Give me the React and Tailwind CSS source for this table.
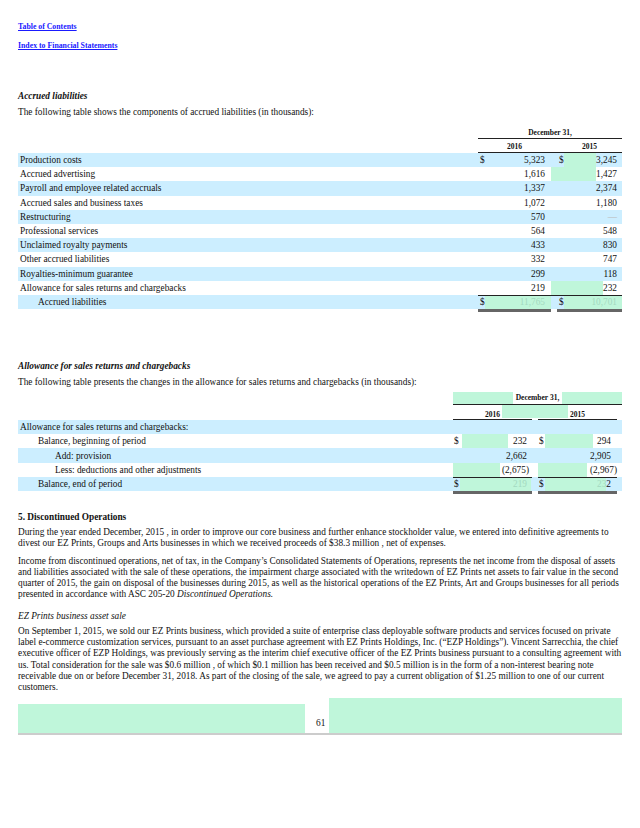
import React from 'react';

const accrued = [
  { label: 'Production costs', a: '5,323', b: '3,245', dollar: true, blue: true, fillB: true },
  { label: 'Accrued advertising', a: '1,616', b: '1,427', fillGap: true, fillB: true },
  { label: 'Payroll and employee related accruals', a: '1,337', b: '2,374', blue: true },
  { label: 'Accrued sales and business taxes', a: '1,072', b: '1,180' },
  { label: 'Restructuring', a: '570', b: '—', blue: true, dash: true },
  { label: 'Professional services', a: '564', b: '548' },
  { label: 'Unclaimed royalty payments', a: '433', b: '830', blue: true },
  { label: 'Other accrued liabilities', a: '332', b: '747' },
  { label: 'Royalties-minimum guarantee', a: '299', b: '118', blue: true },
  { label: 'Allowance for sales returns and chargebacks', a: '219', b: '232', fillGap: true, fillB: true },
];

const AccruedRow = ({ row }) => (
  <div className={`flex h-[14.2px] items-center ${row.blue ? 'bg-[#cceeff]' : ''}`}>
    <div className="flex-1 pl-[2px]">{row.label}</div>
    <div className="flex h-full w-[73px] items-center pl-[2px] pr-[6px]">
      <span className="w-[5px]">{row.dollar ? '$' : ''}</span>
      <span className="flex-1" />
      <span>{row.a}</span>
    </div>
    <div className={`h-full w-[6px] ${row.fillGap ? 'bg-[#bff6da]' : ''}`} />
    <div className="flex h-full w-[65px] items-center pr-[5px]">
      <span className={`flex h-full items-center ${row.fillGap ? 'w-0' : 'w-[7px] pl-[2px]'}`}>
        {row.dollar ? '$' : ''}
      </span>
      <span className={`h-full flex-1 ${row.fillB ? 'bg-[#bff6da]' : ''}`} />
      <span className={row.dash ? 'text-[#bbb]' : ''}>{row.b}</span>
    </div>
  </div>
);

const allowance = [
  { label: 'Allowance for sales returns and chargebacks:', indent: 'pl-[2px]', blue: true },
  { label: 'Balance, beginning of period', indent: 'pl-[20px]', a: '232', b: '294', dollar: true, fill: true },
  { label: 'Add: provision', indent: 'pl-[37px]', a: '2,662', b: '2,905', blue: true },
  { label: 'Less: deductions and other adjustments', indent: 'pl-[37px]', a: '(2,675)', b: '(2,967)', paren: true },
];

const AllowRow = ({ row }) => (
  <div className={`flex h-[14.2px] items-center ${row.blue ? 'bg-[#cceeff]' : ''}`}>
    <div className={`flex-1 ${row.indent}`}>{row.label}</div>
    {row.paren ? (
      <>
        <div className="flex h-full w-[79px] items-center pr-[3px]">
          <span className="h-full w-[47px] bg-[#bff6da]" />
          <span className="flex-1 text-right">{row.a}</span>
        </div>
        <div className="w-[6px]" />
        <div className="flex h-full w-[79px] items-center">
          <span className="h-full w-[49px] bg-[#bff6da]" />
          <span className="flex-1 text-right">{row.b}</span>
        </div>
      </>
    ) : (
      <>
        <div className="flex h-full w-[79px] items-center pl-[1px] pr-[5px]">
          <span className="w-[8px]">{row.dollar ? '$' : ''}</span>
          <span className={`h-full w-[46px] ${row.fill ? 'bg-[#bff6da]' : ''}`} />
          <span className="flex-1 text-right">{row.a}</span>
        </div>
        <div className="w-[6px]" />
        <div className="flex h-full w-[79px] items-center pl-[1px] pr-[6px]">
          <span className="w-[6px]">{row.dollar ? '$' : ''}</span>
          <span className={`h-full w-[48px] ${row.fill ? 'bg-[#bff6da]' : ''}`} />
          <span className="flex-1 text-right">{row.b}</span>
        </div>
      </>
    )}
    <div className="w-[5px]" />
  </div>
);

const App = () => {
  return (
    <div className="min-h-[828px] w-[640px] bg-white px-[18px] font-[family-name:Liberation_Serif,serif] text-[9.3px] leading-[10px] text-[#111]">
      <div className="pt-[22px] text-[7.8px] font-bold text-[#1a1aff] underline">Table of Contents</div>
      <div className="mt-[9px] text-[7.8px] font-bold text-[#1a1aff] underline">Index to Financial Statements</div>

      <div className="mt-[40px] font-bold italic">Accrued liabilities</div>
      <div className="mt-[6px]">The following table shows the components of accrued liabilities (in thousands):</div>

      {/* accrued liabilities table */}
      <div className="mt-[11px] text-[7.5px] font-bold">
        <div className="flex">
          <div className="flex-1" />
          <div className="h-[11px] w-[144px] border-b border-[#222] text-center leading-[10px]">December 31,</div>
        </div>
        <div className="flex">
          <div className="flex-1" />
          <div className="flex h-[14px] w-[144px] border-b border-[#222] pt-[3px]">
            <div className="w-[73px] text-center">2016</div>
            <div className="w-[6px]" />
            <div className="w-[65px] text-center">2015</div>
          </div>
        </div>
      </div>
      {accrued.map((row) => (
        <AccruedRow key={row.label} row={row} />
      ))}
      <div className="flex h-[14.2px] items-center bg-[#cceeff]">
        <div className="flex-1 pl-[20px]">Accrued liabilities</div>
        <div className="flex h-full w-[73px] items-center border-t-[1.5px] border-[#222] pl-[2px]">
          <span className="w-[5px]">$</span>
          <span className="flex h-full flex-1 items-center justify-end bg-[#bff6da] pr-[6px] text-[#a3d9c0]">11,765</span>
        </div>
        <div className="h-full w-[6px] border-t-[1.5px] border-[#222]" />
        <div className="flex h-full w-[65px] items-center border-t-[1.5px] border-[#222] pl-[2px]">
          <span className="w-[5px]">$</span>
          <span className="flex h-full flex-1 items-center justify-end bg-[#bff6da] pr-[5px] text-[#a3d9c0]">10,701</span>
        </div>
      </div>
      <div className="flex h-[3px]">
        <div className="flex-1" />
        <div className="w-[73px] bg-[#666]" />
        <div className="w-[6px]" />
        <div className="w-[65px] bg-[#666]" />
      </div>

      <div className="mt-[49px] font-bold italic">Allowance for sales returns and chargebacks</div>
      <div className="mt-[6px]">The following table presents the changes in the allowance for sales returns and chargebacks (in thousands):</div>

      {/* allowance table */}
      <div className="mt-[5px] text-[7.5px] font-bold">
        <div className="flex">
          <div className="flex-1" />
          <div className="flex h-[13px] w-[169px] border-b-[1.5px] border-[#222]">
            <span className="w-[60px] bg-[#bff6da]" />
            <span className="flex-1 pt-[1px] text-center">December 31,</span>
            <span className="w-[60px] bg-[#bff6da]" />
          </div>
        </div>
        <div className="flex h-[15px]">
          <div className="flex-1" />
          <div className="flex w-[79px] border-b-[1.5px] border-[#222]">
            <span className="flex-1 pt-[5px] text-right">2016</span>
            <span className="ml-[2px] h-[13px] w-[30px] bg-[#bff6da]" />
          </div>
          <div className="h-[13px] w-[6px] bg-[#bff6da]" />
          <div className="flex w-[79px] border-b-[1.5px] border-[#222]">
            <span className="h-[13px] w-[30px] bg-[#bff6da]" />
            <span className="flex-1 pl-[2px] pt-[5px]">2015</span>
          </div>
          <div className="w-[5px]" />
        </div>
      </div>
      {allowance.map((row) => (
        <AllowRow key={row.label} row={row} />
      ))}
      <div className="flex h-[14.2px] items-center bg-[#cceeff]">
        <div className="flex-1 pl-[20px]">Balance, end of period</div>
        <div className="flex h-full w-[79px] items-center border-t-[1.5px] border-[#222] pl-[1px] pr-[1px]">
          <span className="w-[6px]">$</span>
          <span className="flex h-full flex-1 items-center justify-end bg-[#bff6da] pr-[4px] text-[#a3d9c0]">219</span>
        </div>
        <div className="w-[6px]" />
        <div className="flex h-full w-[79px] items-center border-t-[1.5px] border-[#222] pl-[1px] pr-[6px]">
          <span className="w-[6px]">$</span>
          <span className="flex h-full flex-1 items-center justify-end bg-[#bff6da] text-[#a3d9c0]">23</span>
          <span>2</span>
        </div>
        <div className="w-[5px]" />
      </div>
      <div className="flex h-[3px]">
        <div className="flex-1" />
        <div className="w-[79px] bg-[#666]" />
        <div className="w-[6px]" />
        <div className="w-[79px] bg-[#666]" />
        <div className="w-[5px]" />
      </div>

      {/* discontinued operations */}
      <div className="mt-[18px] font-bold">5. Discontinued Operations</div>
      <p className="mt-[5px] leading-[11.3px]">
        During the year ended December, 2015 , in order to improve our core business and further enhance stockholder value, we entered into definitive agreements to divest our EZ Prints, Groups and Arts businesses in which we received proceeds of $38.3 million , net of expenses.
      </p>
      <p className="mt-[6px] leading-[11.3px]">
        Income from discontinued operations, net of tax, in the Company’s Consolidated Statements of Operations, represents the net income from the disposal of assets and liabilities associated with the sale of these operations, the impairment charge associated with the writedown of EZ Prints net assets to fair value in the second quarter of 2015, the gain on disposal of the businesses during 2015, as well as the historical operations of the EZ Prints, Art and Groups businesses for all periods presented in accordance with ASC 205-20 <i>Discontinued Operations.</i>
      </p>
      <div className="mt-[10px] italic">EZ Prints business asset sale</div>
      <p className="mt-[5px] leading-[11.3px]">
        On September 1, 2015, we sold our EZ Prints business, which provided a suite of enterprise class deployable software products and services focused on private label e-commerce customization services, pursuant to an asset purchase agreement with EZ Prints Holdings, Inc. (“EZP Holdings”). Vincent Sarrecchia, the chief executive officer of EZP Holdings, was previously serving as the interim chief executive officer of the EZ Prints business pursuant to a consulting agreement with us. Total consideration for the sale was $0.6 million , of which $0.1 million has been received and $0.5 million is in the form of a non-interest bearing note receivable due on or before December 31, 2018. As part of the closing of the sale, we agreed to pay a current obligation of $1.25 million to one of our current customers.
      </p>

      {/* page footer */}
      <div className="mt-[4px] flex h-[37px] items-end border-b-2 border-[#ccc]">
        <div className="h-[29px] w-[287px] bg-[#bff6da]" />
        <div className="w-[24px] pb-[5px] pl-[11px]">61</div>
        <div className="h-full flex-1 bg-[#bff6da]" />
      </div>
    </div>
  );
};

export default App;
